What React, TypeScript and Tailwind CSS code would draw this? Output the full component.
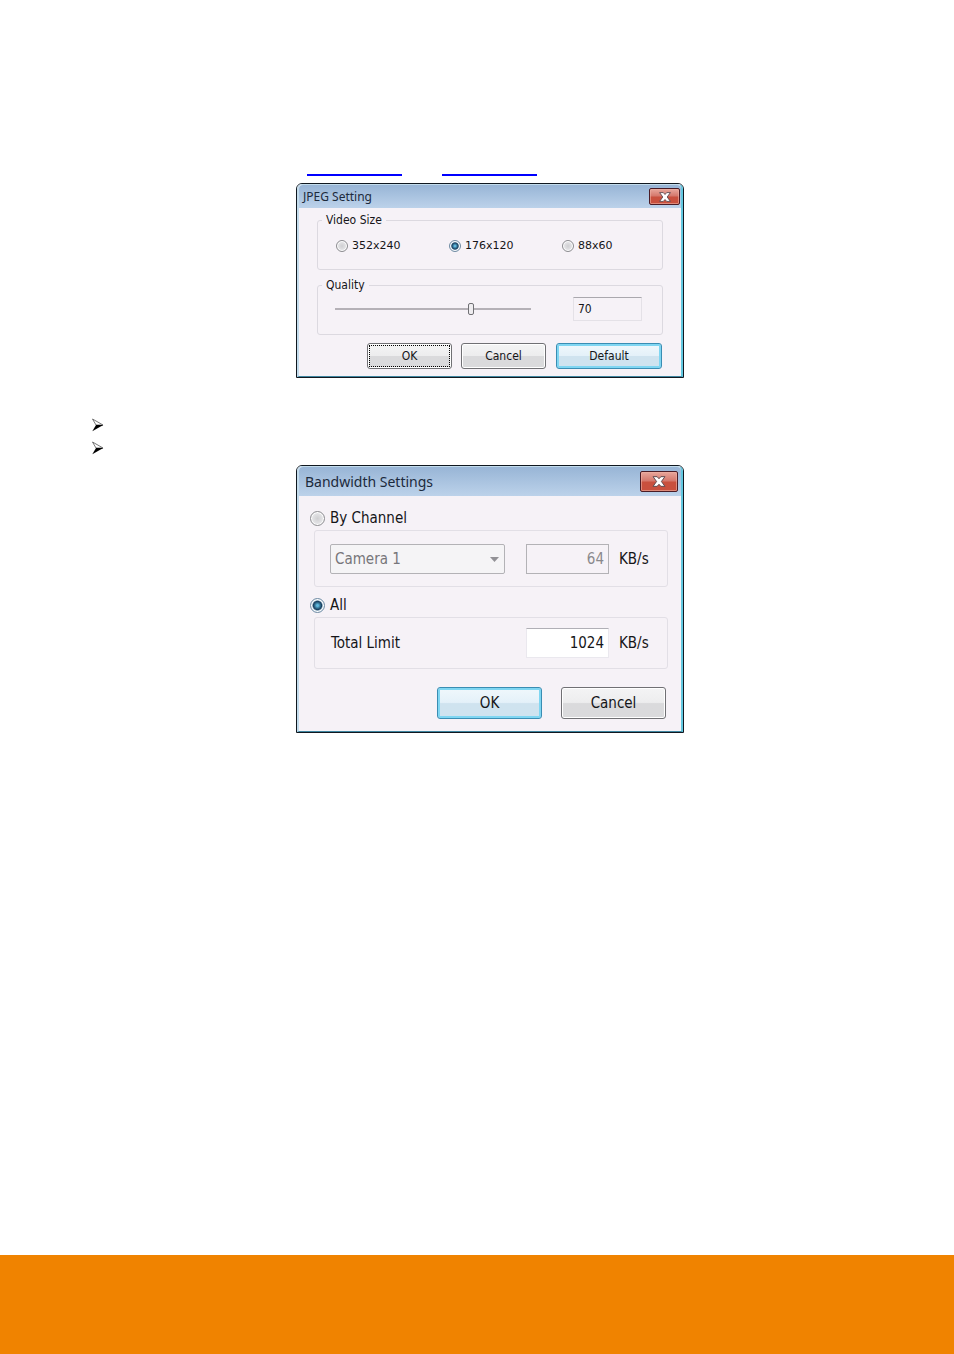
import { useState, type ReactNode } from "react"

function CloseIcon({ className }: { className: string }) {
  return (
    <svg viewBox="0 0 12 10" className={className} aria-hidden="true">
      <path
        d="M.6.6h3.7L6 2.5 7.7.6h3.7L8.2 5l3.2 4.4H7.7L6 7.5 4.3 9.4H.6L3.8 5z"
        fill="#fff"
        stroke="#5d4a4f"
        strokeWidth="0.9"
      />
    </svg>
  )
}

function ArrowBullet() {
  return (
    <svg viewBox="0 0 12 14" className="w-3 h-[14px]" aria-hidden="true">
      <path d="M.5 1 11 7H4z" fill="#fff" stroke="#555" strokeWidth="0.8" />
      <path d="M4 7h7.3L.3 13.3z" fill="#000" />
    </svg>
  )
}

interface DialogProps {
  title: string
  large?: boolean
  className?: string
  children: ReactNode
}

function Dialog({ title, large, className = "", children }: DialogProps) {
  return (
    <section
      aria-label={title}
      className={`w-full max-w-[388px] rounded-t-md border border-[#101820] bg-[#f6f2f7] ${className}`}
    >
      <div className="rounded-t-[5px] border-2 border-t border-b border-[#c3dcec] border-r-[#62c8e0] border-b-[#3f86a0]">
        <header
          className={`flex items-center justify-between rounded-t bg-linear-to-b from-[#98b5d6] to-[#bcd2ea] text-[#1c2a3c] ${
            large ? "h-[29px] pl-[6px] pr-[3px] text-[14px]" : "h-[23px] pl-1 pr-px text-[12px]"
          }`}
        >
          <h2 className="font-['Noto_Sans',sans-serif]">{title}</h2>
          <button
            type="button"
            aria-label="Close"
            className={`flex items-center justify-center rounded-xs border border-[#4a1c26] bg-linear-to-b from-[#e6a297] from-5% via-[#d4766a] via-48% to-[#c9503e] to-52% inset-ring inset-ring-[#eeb0a4]/60 ${
              large ? "w-[38px] h-[21px]" : "w-[31px] h-[17px]"
            }`}
          >
            <CloseIcon className={large ? "w-[14px] h-[11px]" : "w-3 h-[10px]"} />
          </button>
        </header>
        {children}
      </div>
    </section>
  )
}

interface RadioProps {
  id: string
  name: string
  label: string
  checked: boolean
  onChange: () => void
  large?: boolean
}

function Radio({ id, name, label, checked, onChange, large }: RadioProps) {
  return (
    <div className={`flex items-center ${large ? "gap-[5px]" : "gap-1"}`}>
      <input
        type="radio"
        id={id}
        name={name}
        checked={checked}
        onChange={onChange}
        className={`appearance-none shrink-0 rounded-full border border-[#8c8c90] bg-radial from-[#cfcfd2] to-[#f4f4f6] inset-ring inset-ring-white checked:border-[#6f8ba3] checked:from-[#5fb8dc] checked:from-10% checked:via-[#17405f] checked:via-45% checked:to-[#d5e6f0] checked:to-60% ${
          large ? "size-[15px]" : "size-3"
        }`}
      />
      <label
        htmlFor={id}
        className={large ? "text-[15px] leading-5" : "font-['DejaVu_Sans',sans-serif] text-[11px]"}
      >
        {label}
      </label>
    </div>
  )
}

interface PushButtonProps {
  children: ReactNode
  primary?: boolean
  focused?: boolean
  className: string
}

function PushButton({ children, primary, focused, className }: PushButtonProps) {
  const look = primary
    ? "border-[#3a8db3] inset-ring-2 inset-ring-[#7fd6f2] from-[#f0f8fc] via-[#e4f1f9] to-[#cfe3ef]"
    : "border-[#707074] inset-ring inset-ring-white from-[#f4f4f5] via-[#ededee] to-[#dadadc]"
  return (
    <button
      type="button"
      className={`flex items-center justify-center rounded-[3px] border bg-linear-to-b via-48% to-52% ${look} ${className}`}
    >
      {focused ? (
        <span className="flex flex-1 self-stretch m-px items-center justify-center border border-dotted border-black">
          {children}
        </span>
      ) : (
        children
      )}
    </button>
  )
}

const SIZES = ["352x240", "176x120", "88x60"]

function JpegDialog() {
  const [size, setSize] = useState("176x120")
  const [quality, setQuality] = useState(70)

  return (
    <Dialog title="JPEG Setting" className="mt-[7px]">
      <div className="pl-[18px] pr-[18px] pt-1 pb-[7px] text-[12px] leading-4">
        <fieldset className="h-[58px] rounded-[3px] border border-[#dcd9e0] pl-[18px]">
          <legend className="-ml-[14px] px-1">Video Size</legend>
          <div className="grid grid-cols-[113px_113px_1fr] pt-[10px]">
            {SIZES.map((item) => (
              <Radio
                key={item}
                id={`size-${item}`}
                name="size"
                label={item}
                checked={size === item}
                onChange={() => setSize(item)}
              />
            ))}
          </div>
        </fieldset>

        <fieldset className="mt-[7px] h-[58px] rounded-[3px] border border-[#dcd9e0] pl-[17px] pr-5">
          <legend className="-ml-[13px] px-1">Quality</legend>
          <div className="flex items-center justify-between pt-1">
            <input
              type="range"
              aria-label="Quality"
              min={0}
              max={100}
              value={quality}
              onChange={(e) => setQuality(Number(e.target.value))}
              className="appearance-none w-[196px] h-[14px] bg-transparent [&::-webkit-slider-runnable-track]:h-[2px] [&::-webkit-slider-runnable-track]:bg-[#b5b1b7] [&::-webkit-slider-thumb]:appearance-none [&::-webkit-slider-thumb]:-mt-[5px] [&::-webkit-slider-thumb]:h-3 [&::-webkit-slider-thumb]:w-[6px] [&::-webkit-slider-thumb]:rounded-xs [&::-webkit-slider-thumb]:border [&::-webkit-slider-thumb]:border-[#707074] [&::-webkit-slider-thumb]:bg-[#efedf0]"
            />
            <input
              type="text"
              aria-label="Quality value"
              readOnly
              value={quality}
              className="w-[69px] h-6 border border-[#e4e1e7] border-t-[#aaa8ae] pl-1"
            />
          </div>
        </fieldset>

        <div className="mt-2 flex justify-end pr-px">
          <PushButton focused className="w-[85px] h-[26px]">OK</PushButton>
          <PushButton className="ml-[9px] w-[85px] h-[26px]">Cancel</PushButton>
          <PushButton primary className="ml-[10px] w-[106px] h-[26px]">Default</PushButton>
        </div>
      </div>
    </Dialog>
  )
}

function BandwidthDialog() {
  const [mode, setMode] = useState("all")
  const [limit, setLimit] = useState("1024")

  return (
    <Dialog title="Bandwidth Settings" large className="mt-[6px]">
      <div className="pl-[11px] pr-[13px] pt-3 pb-3 text-[15px] leading-5">
        <Radio
          id="mode-channel"
          name="mode"
          label="By Channel"
          large
          checked={mode === "channel"}
          onChange={() => setMode("channel")}
        />
        <div className="ml-1 mt-[2px] flex h-[57px] items-center rounded-[3px] border border-[#e2dfe6] pl-[15px]">
          <div className="relative w-[175px]">
            <select
              aria-label="Camera"
              disabled
              className="appearance-none w-full h-[30px] rounded-xs border border-[#b3b2b6] bg-[#f5f4f6] pl-1 text-[#77767a] opacity-100"
            >
              <option>Camera 1</option>
            </select>
            <svg viewBox="0 0 9 5" className="absolute right-[6px] top-[13px] w-[9px] h-[5px]" aria-hidden="true">
              <path d="M0 0h9L4.5 5z" fill="#929196" />
            </svg>
          </div>
          <input
            type="text"
            id="channel-limit"
            disabled
            value="64"
            className="ml-[21px] w-[83px] h-[30px] border border-[#b3b2b6] pr-1 text-right text-[#8a898d]"
          />
          <label htmlFor="channel-limit" className="ml-[10px]">KB/s</label>
        </div>

        <div className="mt-2">
          <Radio
            id="mode-all"
            name="mode"
            label="All"
            large
            checked={mode === "all"}
            onChange={() => setMode("all")}
          />
        </div>
        <div className="ml-1 mt-[2px] flex h-[52px] items-center rounded-[3px] border border-[#e2dfe6] pl-4">
          <label htmlFor="total-limit" className="w-[195px]">Total Limit</label>
          <input
            type="text"
            id="total-limit"
            value={limit}
            onChange={(e) => setLimit(e.target.value)}
            className="w-[83px] h-[30px] border border-[#eae8ee] border-t-[#b0afb6] bg-white pr-1 text-right"
          />
          <span className="ml-[10px]">KB/s</span>
        </div>

        <div className="mt-[18px] flex justify-end gap-[19px] pr-[2px]">
          <PushButton primary className="w-[105px] h-8">OK</PushButton>
          <PushButton className="w-[105px] h-8">Cancel</PushButton>
        </div>
      </div>
    </Dialog>
  )
}

export default function App() {
  return (
    <div className="flex min-h-screen flex-col bg-white font-['DejaVu_Sans_Condensed','Noto_Sans',sans-serif] text-[#151518]">
      <main className="flex flex-1 flex-col items-center pt-40 pl-[92px] pr-[66px]">
        <nav className="flex w-full max-w-[388px] gap-10 pl-[11px]">
          <a href="#jpeg" aria-label="JPEG setting" className="h-4 w-[95px] border-b-2 border-[#0000ff]" />
          <a href="#bandwidth" aria-label="Bandwidth settings" className="h-4 w-[95px] border-b-2 border-[#0000ff]" />
        </nav>
        <JpegDialog />
        <ul className="mt-[35px] self-stretch">
          <li className="flex h-[23px] items-center">
            <ArrowBullet />
          </li>
          <li className="flex h-[23px] items-center">
            <ArrowBullet />
          </li>
        </ul>
        <BandwidthDialog />
      </main>
      <footer className="h-[99px] bg-[#f08300]" />
    </div>
  )
}
